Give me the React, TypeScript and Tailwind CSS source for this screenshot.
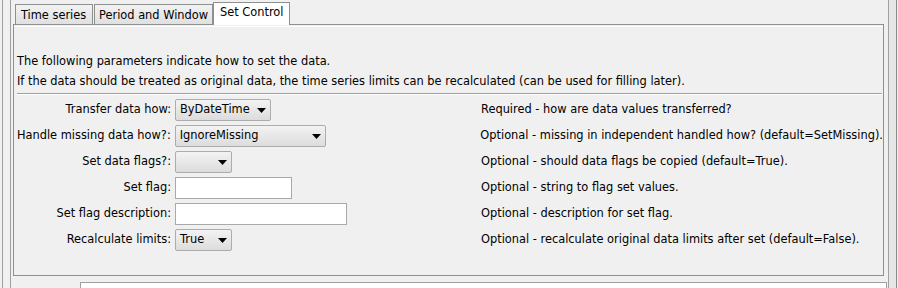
import React from "react";

const Arrow = () => (
  <svg width="9" height="5" viewBox="0 0 9 5" className="shrink-0">
    <path d="M0 0H9L4.5 5Z" fill="#000" />
  </svg>
);

function Combo({ w, value }: { w: string; value: string }) {
  return (
    <div
      className={`${w} h-[22px] flex items-center justify-between pl-[4px] pr-[4px] border border-[#acacac] rounded-[2px] bg-gradient-to-b from-[#f3f3f3] to-[#dcdcdc] text-black`}
    >
      <span className="whitespace-nowrap leading-none">{value}</span>
      <Arrow />
    </div>
  );
}

function Field({ w }: { w: string }) {
  return <div className={`${w} h-[22px] border border-[#a9a9a9] bg-white`} />;
}

type Row = { label: string; control: React.ReactNode; desc: string };

const rows: Row[] = [
  { label: "Transfer data how:", control: <Combo w="w-[96px]" value="ByDateTime" />, desc: "Required - how are data values transferred?" },
  { label: "Handle missing data how?:", control: <Combo w="w-[151px]" value="IgnoreMissing" />, desc: "Optional - missing in independent handled how? (default=SetMissing)." },
  { label: "Set data flags?:", control: <Combo w="w-[57px]" value="" />, desc: "Optional - should data flags be copied (default=True)." },
  { label: "Set flag:", control: <Field w="w-[117px]" />, desc: "Optional - string to flag set values." },
  { label: "Set flag description:", control: <Field w="w-[172px]" />, desc: "Optional - description for set flag." },
  { label: "Recalculate limits:", control: <Combo w="w-[57px]" value="True" />, desc: "Optional - recalculate original data limits after set (default=False)." },
];

export default function App() {
  return (
    <div className="w-[898px] h-[288px] overflow-hidden bg-[#f0f0f0] flex font-['DejaVu_Sans',sans-serif] text-[11.4px] text-black">
      <div className="w-[2px] shrink-0" />
      <div className="w-px shrink-0 bg-[#a0a0a0]" />
      <div className="w-[7px] shrink-0" />
      <div className="w-px shrink-0 bg-[#a0a0a0]" />

      {/* main column */}
      <div className="flex-1 flex flex-col min-w-0">
        {/* tabs */}
        <div className="h-[24px] shrink-0 flex items-end pl-[4px] relative z-10">
          <div className="w-[78px] h-[20px] border-t border-l border-r border-[#8e8f8f] bg-gradient-to-b from-[#f2f2f2] to-[#e0e0e0] pl-[5px] pt-[3px] leading-[14px] whitespace-nowrap">
            Time series
          </div>
          <div className="w-px" />
          <div className="w-[119px] h-[20px] border-t border-l border-r border-[#8e8f8f] bg-gradient-to-b from-[#f2f2f2] to-[#e0e0e0] pl-[4px] pt-[3px] leading-[14px] whitespace-nowrap">
            Period and Window
          </div>
          <div className="w-[77px] h-[23px] -mb-px border-t border-l border-r border-[#8e8f8f] bg-white pl-[6px] pt-[2px] leading-[14px] whitespace-nowrap">
            Set Control
          </div>
        </div>

        {/* panel */}
        <div className="ml-[2px] mr-[4px] h-[252px] shrink-0 border border-[#8e8f8f] flex flex-col">
          <div className="flex-1 border-t border-[#ffffff] mt-px flex flex-col pt-[24px]">
            <div className="h-[20px] leading-[20px] pl-[3px] whitespace-nowrap">
              The following parameters indicate how to set the data.
            </div>
            <div className="h-[20px] leading-[20px] pl-[3px] whitespace-nowrap">
              If the data should be treated as original data, the time series limits can be recalculated (can be used for filling later).
            </div>
            <div className="mt-[2px] ml-[3px] mr-[1px] h-[2px] border-t border-[#a0a0a0] border-b border-b-white" />
            <div className="mt-[4px] flex flex-col gap-[4px]">
              {rows.map((r) => (
                <div key={r.label} className="h-[22px] flex items-center">
                  <div className="w-[157px] text-right whitespace-nowrap">{r.label}</div>
                  <div className="w-[310px] pl-[4px] flex items-center">{r.control}</div>
                  <div className="whitespace-nowrap">{r.desc}</div>
                </div>
              ))}
            </div>
          </div>
        </div>

        {/* bottom box */}
        <div className="mt-[6px] ml-[69px] mr-px h-[20px] border border-[#a0a0a0] bg-white shrink-0" />
      </div>

      <div className="w-px shrink-0 bg-[#a0a0a0]" />
      <div className="w-[7px] shrink-0 bg-[#e6e6e6]" />
      <div className="w-px shrink-0 bg-[#8a8a8a]" />
      <div className="w-px shrink-0" />
    </div>
  );
}
